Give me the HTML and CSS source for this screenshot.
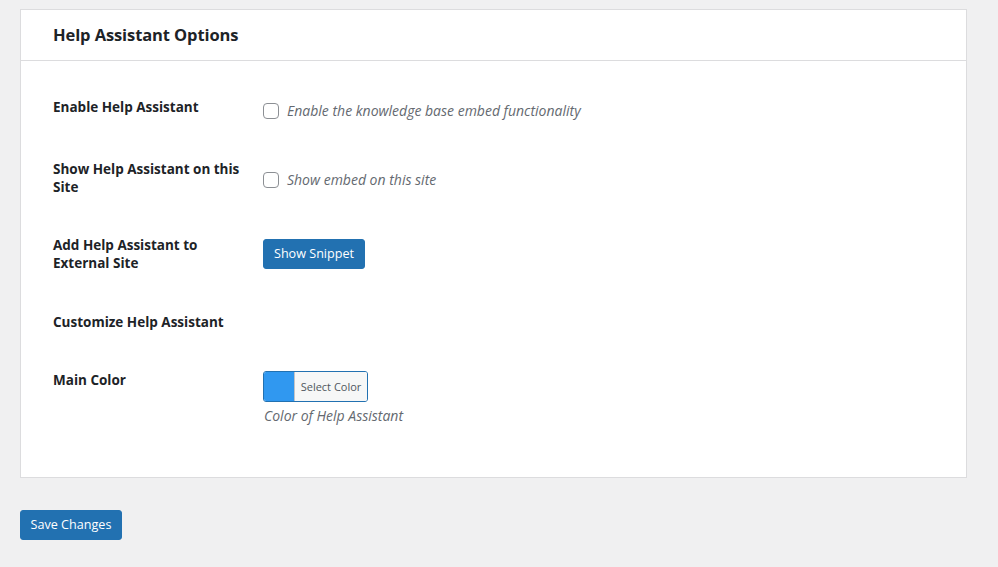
FILE: index.html
```html
<!DOCTYPE html>
<html lang="en">
<head>
<meta charset="utf-8">
<title>Help Assistant Options</title>
<link rel="stylesheet" href="styles.css">
</head>
<body>
<div class="wrap">
  <section class="card">
    <header class="card-head">
      <h2 class="card-title">Help Assistant Options</h2>
    </header>
    <div class="card-body">
      <div class="row row-1">
        <div class="label">Enable Help Assistant</div>
        <div class="field field-1">
          <label class="check"><span class="box"></span><span class="desc">Enable the knowledge base embed functionality</span></label>
        </div>
      </div>
      <div class="row row-2">
        <div class="label">Show Help Assistant on this Site</div>
        <div class="field field-2">
          <label class="check"><span class="box"></span><span class="desc">Show embed on this site</span></label>
        </div>
      </div>
      <div class="row row-3">
        <div class="label">Add Help Assistant to External Site</div>
        <div class="field field-3">
          <button class="btn" type="button">Show Snippet</button>
        </div>
      </div>
      <div class="row row-4">
        <div class="label">Customize Help Assistant</div>
        <div class="field"></div>
      </div>
      <div class="row row-5">
        <div class="label">Main Color</div>
        <div class="field field-5">
          <div class="picker"><span class="swatch"></span><span class="picker-text">Select Color</span></div>
          <p class="desc note">Color of Help Assistant</p>
        </div>
      </div>
    </div>
  </section>
  <div class="actions">
    <button class="btn" type="button">Save Changes</button>
  </div>
</div>
</body>
</html>
```
FILE: styles.css
```css
html, body {
  margin: 0;
  padding: 0;
  background: #f0f0f1;
}
body {
  font-family: "Open Sans", "Noto Sans", sans-serif;
  color: #1d2327;
  font-size: 14px;
  line-height: 18px;
}
.wrap {
  padding: 9px 31px 0 20px;
}
.card {
  background: #fff;
  border: 1px solid #dcdcde;
}
.card-head {
  height: 50px;
  border-bottom: 1px solid #dcdcde;
  padding: 0 32px;
  display: flex;
  align-items: center;
}
.card-title {
  margin: 0;
  font-size: 16.5px;
  font-weight: 700;
  letter-spacing: -0.1px;
}
.card-body {
  padding: 17px 32px 52px;
}
.row {
  display: grid;
  grid-template-columns: 210px 1fr;
}
.row-1 { height: 62px; }
.row-2 { height: 76px; }
.row-3 { height: 77px; }
.row-4 { height: 58px; }
.label {
  padding-top: 20px;
  font-weight: 700;
  font-size: 13.5px;
  width: 190px;
}
.field-1 { padding-top: 24px; }
.field-2 { padding-top: 31px; }
.field-3 { padding-top: 23px; }
.field-5 { padding-top: 20px; }
.check {
  display: flex;
  align-items: center;
  gap: 8px;
}
.box {
  width: 14px;
  height: 14px;
  border: 1px solid #8c8f94;
  border-radius: 4px;
  background: #fff;
}
.desc {
  font-style: italic;
  color: #646970;
  font-size: 14px;
}
.btn {
  font-family: inherit;
  font-size: 12.6px;
  line-height: 18px;
  height: 30px;
  padding: 0;
  width: 102px;
  background: #2271b1;
  border: 1px solid #2271b1;
  border-radius: 3px;
  color: #fff;
}
.picker {
  display: flex;
  width: 103px;
  height: 29px;
  border: 1px solid #2271b1;
  border-radius: 3px;
  overflow: hidden;
}
.swatch {
  width: 30px;
  background: #3098f0;
}
.picker-text {
  flex: 1;
  background: #f6f7f7;
  border-left: 1px solid #c3c4c7;
  font-size: 11px;
  color: #50575e;
  display: flex;
  align-items: center;
  justify-content: center;
}
.note {
  margin: 5px 0 0 1px;
}
.actions {
  padding-top: 32px;
}
```
